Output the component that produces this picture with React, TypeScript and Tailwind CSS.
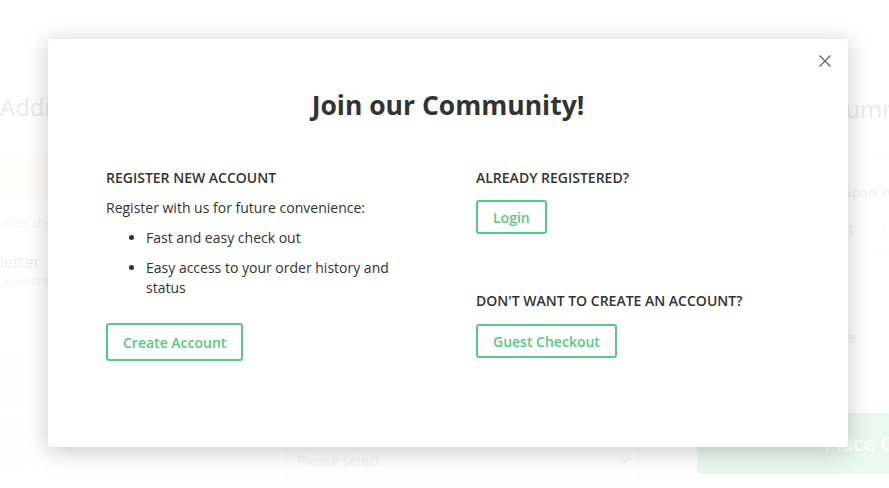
import React from "react";

export default function App() {
  return (
    <div
      className="relative w-[889px] h-[488px] overflow-hidden bg-white text-[#333]"
      style={{ fontFamily: '"Open Sans", "Noto Sans", sans-serif' }}
    >
      {/* Background page */}
      <div className="flex w-full h-full">
        <div className="w-[287px] shrink-0 flex flex-col pt-[90px]">
          <div className="text-[24px] leading-[34px] text-[#333]">Address</div>
          <div className="mt-[31px] h-[45px] bg-[#fdf6dc]" />
          <div className="mt-[14px] text-[12px] leading-[18px] text-[#999] pl-[2px]">after checkout</div>
          <div className="mt-[20px] text-[16px] leading-[20px] text-[#555]">letter</div>
          <div className="text-[12px] leading-[18px] text-[#999] pl-[2px]">awesome</div>
          <div className="mt-[63px] w-[25px] h-[50px] bg-[#f5f5f5]" />
          <div className="mt-[15px] w-[25px] h-[50px] bg-[#f5f5f5]" />
        </div>
        <div className="w-[353px] shrink-0 flex flex-col justify-end pb-[3px]">
          <div className="h-[50px] border border-[#e5e5e5] bg-[#fafafa] flex items-center justify-between pl-[9px] pr-[8px]">
            <span className="text-[14px] text-[#999]">Please select</span>
            <svg width="12" height="8" viewBox="0 0 12 8" fill="none">
              <path d="M1 1.5L6 6.5L11 1.5" stroke="#999" strokeWidth="1.2" />
            </svg>
          </div>
        </div>
        <div className="ml-[57px] flex-1 flex flex-col pt-[92px]">
          <div className="pl-[135px] text-[24px] leading-[34px] whitespace-nowrap">Summary</div>
          <div className="mt-[26px] border-t border-[#ddd]" />
          <div className="mt-[29px] pl-[148px] text-[13px] leading-[20px] text-[#666] whitespace-nowrap">Sport Watch</div>
          <div className="mt-[14px] pl-[150px] flex items-center text-[14px] text-[#666]">
            <span>1</span>
            <span className="ml-[26px] text-[18px] text-[#bbb]">›</span>
          </div>
          <div className="mt-[12px] border-t border-[#ddd]" />
          <div className="mt-[71px] pl-[130px] text-[14px] text-[#666] whitespace-nowrap">Rate</div>
          <div className="mt-[65px] h-[61px] bg-[#2fbf5e] rounded-[4px] flex items-center pl-[127px] text-[20px] font-semibold text-white whitespace-nowrap">
            Place Order
          </div>
        </div>
      </div>

      {/* Backdrop */}
      <div className="absolute inset-0 bg-white/90" />

      {/* Modal */}
      <div className="absolute left-[48px] top-[39px] w-[800px] h-[408px] bg-white rounded-[4px] shadow-[0_4px_24px_rgba(0,0,0,0.22)] px-[58px] pt-[49px]">
        <button className="absolute right-[16px] top-[15px] w-[14px] h-[14px] flex items-center justify-center">
          <svg width="14" height="14" viewBox="0 0 14 14" fill="none">
            <path d="M1.5 1.5L12.5 12.5M12.5 1.5L1.5 12.5" stroke="#666" strokeWidth="1.4" />
          </svg>
        </button>
        <h2 className="text-center text-[26.5px] leading-[34px] font-bold text-[#333]">Join our Community!</h2>
        <div className="mt-[46px] flex">
          <div className="w-[310px] shrink-0">
            <div className="text-[14px] leading-[20px] font-semibold uppercase">Register New Account</div>
            <p className="mt-[10px] text-[14px] leading-[20px]">Register with us for future convenience:</p>
            <ul className="list-disc pl-[40px] text-[14px] leading-[20px]">
              <li className="mt-[10px]">Fast and easy check out</li>
              <li className="mt-[10px]">Easy access to your order history and status</li>
            </ul>
            <button className="mt-[25px] h-[38px] px-[15px] border-2 border-[#52cc82] rounded-[3px] text-[14px] font-semibold text-[#52cc82]">
              Create Account
            </button>
          </div>
          <div className="ml-[60px] flex flex-col items-start">
            <div className="text-[14px] leading-[20px] font-semibold uppercase">Already Registered?</div>
            <button className="mt-[12px] h-[34px] px-[15px] border-2 border-[#52cc82] rounded-[3px] text-[14px] font-semibold text-[#52cc82]">
              Login
            </button>
            <div className="mt-[57px] text-[14px] leading-[20px] font-semibold uppercase">Don't want to create an account?</div>
            <button className="mt-[13px] h-[34px] px-[15px] border-2 border-[#52cc82] rounded-[3px] text-[14px] font-semibold text-[#52cc82]">
              Guest Checkout
            </button>
          </div>
        </div>
      </div>
    </div>
  );
}
